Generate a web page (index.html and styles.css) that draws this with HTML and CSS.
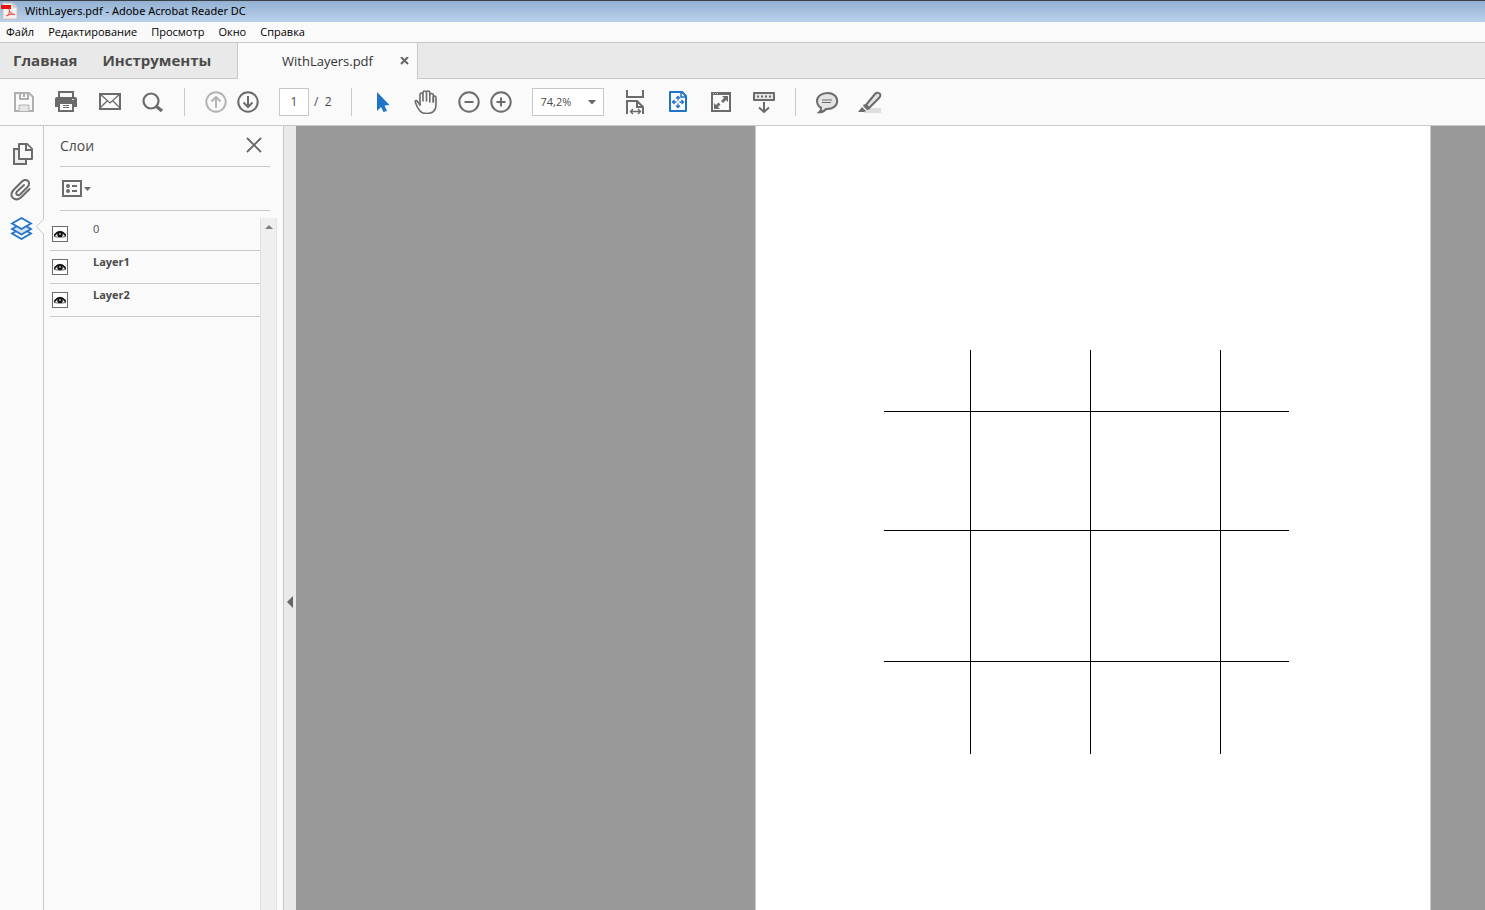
FILE: index.html
```html
<!DOCTYPE html>
<html lang="ru">
<head>
<meta charset="utf-8">
<title>WithLayers.pdf - Adobe Acrobat Reader DC</title>
<link rel="stylesheet" href="styles.css">
</head>
<body>
<svg width="0" height="0" hidden>
  <symbol id="eye" viewBox="0 0 12 10"><path d="M0 6Q6-2 12 5.500V8Q6 9.500 0 8z" fill="#777"/><path d="M0 6.500Q6-1 12 6.500" fill="none" stroke="#111" stroke-width="1.400"/><path d="M1.500 6.500l2-1.500v3zM10.500 6.500l-2-1.500v3z" fill="#fff"/><circle cx="6" cy="5.500" r="2.600" fill="#111"/><path d="M6 4v2" stroke="#fff"/></symbol>
</svg>
<div class="app">
  <header class="titlebar">
    <svg class="app-icon" width="18" height="18" viewBox="0 0 18 18"><path d="M3 1h10l4 4v12H3z" fill="#f4f1ef" stroke="#c9c4c2"/><path d="M13 1v4h4" fill="#ddd" stroke="#bbb"/><path d="M1 3h10v4H1z" fill="#e3150c"/><path d="M6 14c3-1 4-4 3-7 0 3 3 6 6 5.500-3-1-6 0-9 1.500z" fill="none" stroke="#e4685f" stroke-width="1.300"/></svg>
    <span>WithLayers.pdf - Adobe Acrobat Reader DC</span>
  </header>
  <nav class="menubar">
    <button>Файл</button><button>Редактирование</button><button>Просмотр</button><button>Окно</button><button>Справка</button>
  </nav>
  <div class="tabs">
    <div class="main-tabs"><button>Главная</button><button>Инструменты</button></div>
    <div class="doc-tab"><span>WithLayers.pdf</span>
      <button class="tab-close" aria-label="Закрыть вкладку"><svg width="9" height="9" viewBox="0 0 9 9"><path d="M1 0l7 7M8 0L1 7" stroke="#666" stroke-width="2"/></svg></button>
    </div>
    <div class="tab-rest"></div>
  </div>
  <div class="toolbar">
    <div class="group wide">
      <button aria-label="Сохранить"><svg width="24" height="24" viewBox="0 0 24 24" fill="none" stroke="#b0b0b0" stroke-width="2"><path d="M3 3h14l4 4v14H3z"/><path d="M8 3v6h8V3"/><path d="M7 21v-6h10v6" fill="#e6e6e6" stroke-width="1"/><path d="M12 4v3"/></svg></button>
      <button aria-label="Печать"><svg width="24" height="24" viewBox="0 0 24 24"><path d="M0 9q0-2 2-2h18q2 0 2 2v8H0z" fill="#6b6b6b"/><path d="M4 7V2h14v5" fill="#fafafa" stroke="#6b6b6b" stroke-width="2"/><path d="M4 13h14v8H4z" fill="#fff" stroke="#6b6b6b" stroke-width="2"/><path d="M8 15.500h6M8 17.500h6" stroke="#6b6b6b"/><path d="M17 9.500h2" stroke="#ddd"/></svg></button>
      <button aria-label="Отправить"><svg width="24" height="24" viewBox="0 0 24 24" fill="none" stroke="#6b6b6b"><path d="M2 4h20v15H2z" stroke-width="2"/><path d="M2 4l10 9 10-9M2 18l7-7M22 18l-7-7" stroke-width="1.300"/></svg></button>
      <button aria-label="Найти"><svg width="24" height="24" viewBox="0 0 24 24" fill="none" stroke="#6b6b6b"><circle cx="10" cy="11" r="7.500" stroke-width="2.200"/><path d="M15.500 16.500L21 21" stroke-width="3.400"/></svg></button>
    </div>
    <i class="sep"></i>
    <div class="group close">
      <button aria-label="Предыдущая страница"><svg width="24" height="24" viewBox="0 0 24 24" fill="none" stroke="#b4b4b4" stroke-width="2"><circle cx="12" cy="12" r="9.700"/><path d="M12 18V7M7.500 11.500L12 7l4.500 4.500"/></svg></button>
      <button aria-label="Следующая страница"><svg width="24" height="24" viewBox="0 0 24 24" fill="none" stroke="#6b6b6b" stroke-width="2"><circle cx="12" cy="12" r="9.700"/><path d="M12 6v11M7.500 12.500L12 17l4.500-4.500"/></svg></button>
    </div>
    <label class="page-field"><input type="text" value="1" aria-label="Страница"><span>/&nbsp; 2</span></label>
    <i class="sep"></i>
    <div class="group wide">
      <button aria-label="Выделение"><svg width="24" height="24" viewBox="0 0 24 24"><path d="M6 2v19l4-4 2.500 5 3.500-1-2.500-5.500 5-.5z" fill="#1f73c9"/></svg></button>
      <button aria-label="Рука"><svg width="24" height="24" viewBox="0 0 24 24" fill="none" stroke="#6b6b6b" stroke-width="1.600" stroke-linejoin="round" stroke-linecap="round"><path d="M6 15L3.500 11.500C2.500 10 1 10.500 1.300 12c1 3.500 2.400 6.500 4.700 9 1.500 2 3.500 2.500 6.500 2.500 6 0 9.500-3 9.500-8.500V7.500c0-2-2.700-2-2.700 0V12"/><path d="M6 15V4.500c0-2 3-2 3 0V11M9 11V2.500c0-2 3.500-2 3.500 0V11M12.500 11V2.500c0-2 3.300-2 3.300 0V12M15.800 5c0-2 3.500-2 3.500 0v7"/></svg></button>
    </div>
    <div class="group close zoomers">
      <button aria-label="Уменьшить"><svg width="24" height="24" viewBox="0 0 24 24" fill="none" stroke="#6b6b6b" stroke-width="2"><circle cx="12" cy="12" r="9.700"/><path d="M7.500 12h9"/></svg></button>
      <button aria-label="Увеличить"><svg width="24" height="24" viewBox="0 0 24 24" fill="none" stroke="#6b6b6b" stroke-width="2"><circle cx="12" cy="12" r="9.700"/><path d="M7.500 12h9M12 7.500v9"/></svg></button>
    </div>
    <div class="zoom"><select aria-label="Масштаб"><option>74,2%</option></select><svg width="8" height="5" viewBox="0 0 8 5"><path d="M0 0h8L4 4.500z" fill="#666"/></svg></div>
    <div class="group wide">
      <button aria-label="По ширине"><svg width="24" height="26" viewBox="0 0 24 26" fill="none" stroke="#6b6b6b" stroke-width="2"><path d="M4 1v7h16V1"/><path d="M4 25V12h10l6 6v7M14 12v6h6"/><path d="M7 22.500h11M10 20l-2.500 2.500L10 25M15 20l2.500 2.500L15 25" stroke-width="1.400"/></svg></button>
      <button aria-label="Страница целиком"><svg width="24" height="24" viewBox="0 0 24 24" fill="none" stroke="#1f73c9" stroke-width="2"><path d="M4 2h12l4 4v15H4z" stroke-linejoin="round"/><path d="M15 2v5h5" stroke-width="1.500"/><path d="M12 6.500v4M12 13.500v4M6.500 12h4M13.500 12h4M10 8.500l2-2 2 2M10 15.500l2 2 2-2M8.500 10l-2 2 2 2M15.500 10l2 2-2 2" stroke-width="1.300"/></svg></button>
      <button aria-label="Полный экран"><svg width="24" height="24" viewBox="0 0 24 24"><path d="M3 3h18v18H3z" fill="#fafafa" stroke="#6b6b6b" stroke-width="2"/><path d="M3 3h18v2H3z" fill="#6b6b6b"/><path d="M13 6h6v6l-2-2-3 3-2-2 3-3zM5 13v6h6l-2-2 2.500-2.500-2-2L7 15z" fill="#6b6b6b"/><path d="M4 3.500h6" stroke="#bbb" stroke-dasharray="1 1"/></svg></button>
      <button aria-label="Режим чтения"><svg width="24" height="24" viewBox="0 0 24 24" fill="none" stroke="#6b6b6b" stroke-width="2"><path d="M2 3h20v7H2z" fill="#e6e6e6" stroke-linejoin="round"/><path d="M5 6.500h14" stroke-dasharray="2 2"/><path d="M12 12v10M7 17.500l5 4.500 5-4.500"/></svg></button>
    </div>
    <i class="sep"></i>
    <div class="group wide">
      <button aria-label="Комментарий"><svg width="24" height="24" viewBox="0 0 24 24" fill="#e3e3e3" stroke="#6b6b6b" stroke-width="2"><path d="M12.500 3C6.500 3 2 6.500 2 11c0 3 1.500 5.300 4 6.700.3 2-.5 3.500-1.800 4.600 3 0 5.300-1.300 7-3.300 6.800.3 11-3.200 11-8s-4-8-9.700-8z"/><path d="M7 10h10M7 12.500h9" stroke-width="1.200"/></svg></button>
      <button aria-label="Выделить текст"><svg width="24" height="24" viewBox="0 0 24 24"><path d="M9 18h14v5H6z" fill="#dedede"/><path d="M8 15L17 4c2-2 5-1 5 0 1 2 0 3-1 4L11 18z" fill="#e3e3e3" stroke="#6b6b6b" stroke-width="2"/><path d="M6 14l6 5-3 1-4-4zM4 17l4 4-2 1H0z" fill="#6b6b6b"/></svg></button>
    </div>
  </div>
  <main class="work">
    <aside class="rail">
      <button aria-label="Миниатюры"><svg width="24" height="24" viewBox="0 0 24 24" fill="#fafafa" stroke="#6b6b6b" stroke-width="2"><path d="M9 7H4v15h12v-4" fill="#eee"/><path d="M9 2h8l5 5v10H9z" stroke-linejoin="round"/><path d="M16 2v6h6"/></svg></button>
      <button aria-label="Вложения"><svg width="24" height="24" viewBox="1 2 24 24" fill="none" stroke="#6b6b6b" stroke-width="2" stroke-linecap="round"><path d="M20.500 12L13 19.500C10 22.500 6.500 23 4 21S2 16 4.500 13L13 4.500c2-2 4.500-1.800 6-.5s1.500 4-.5 6l-7.500 7.500c-2 2-5-.5-3-3L15 8"/></svg></button>
      <button aria-label="Слои"><svg width="24" height="24" viewBox="0 -1 24 24" fill="none" stroke="#1f73c9" stroke-width="1.800"><path d="M2 16.500L11.500 22l9.500-5.500-9.500-5.500z" fill="#fafafa"/><path d="M2 12l9.500 5.500L21 12l-9.500-5.500z" fill="#d3e2f3"/><path d="M2 6.500L11.500 12 21 6.500 11.500 1z" fill="#fafafa"/></svg></button>
      <svg class="pointer" width="8" height="15" viewBox="0 0 8 15"><path d="M7.500 0L.5 7.500l7 7.500" fill="#fafafa" stroke="#c8c8c8"/></svg>
    </aside>
    <section class="panel">
      <div class="panel-head"><h2>Слои</h2><button aria-label="Закрыть"><svg width="16" height="16" viewBox="0 0 16 16"><path d="M1 1l14 14M15 1L1 15" stroke="#666" stroke-width="1.800"/></svg></button></div>
      <div class="panel-tools"><button aria-label="Параметры"><svg width="30" height="18" viewBox="0 0 30 18" fill="none" stroke="#6b6b6b" stroke-width="2"><path d="M1 1h18v15H1z"/><path d="M10 6h5M10 11h5"/><g fill="#6b6b6b" stroke="none"><circle cx="6" cy="6" r="2"/><circle cx="6" cy="11" r="2"/><path d="M22 7h7l-3.500 4z"/></g></svg></button></div>
      <div class="panel-body">
        <ul class="layers">
          <li><button aria-label="Видимость 0"><svg width="12" height="10"><use href="#eye"/></svg></button><span>0</span></li>
          <li><button aria-label="Видимость Layer1"><svg width="12" height="10"><use href="#eye"/></svg></button><b>Layer1</b></li>
          <li><button aria-label="Видимость Layer2"><svg width="12" height="10"><use href="#eye"/></svg></button><b>Layer2</b></li>
        </ul>
        <div class="scroll"><svg width="8" height="4" viewBox="0 0 8 4"><path d="M0 4l4-4 4 4z" fill="#808080"/></svg></div>
      </div>
    </section>
    <button class="splitter" aria-label="Свернуть панель"><svg width="6" height="12" viewBox="0 0 6 12"><path d="M6 0v12L0 6z" fill="#666"/></svg></button>
    <section class="canvas">
      <div class="sheet">
        <svg class="drawing" width="405" height="404" viewBox="0 0 405 404" stroke="#000" shape-rendering="crispEdges"><path d="M86.500 0v404M206.500 0v404M336.500 0v404M0 61.500h405M0 180.500h405M0 311.500h405"/></svg>
      </div>
    </section>
  </main>
</div>
</body>
</html>
```
FILE: styles.css
```css
* { box-sizing: border-box; }
body {
  margin: 0;
  font-family: "Open Sans", "Noto Sans", sans-serif;
  font-size: 12px;
  color: #4b4b4b;
  background: #fafafa;
}
button {
  padding: 0;
  border: 0;
  background: none;
  font: inherit;
  color: inherit;
}
svg { display: block; flex: none; }
.app { display: flex; flex-direction: column; height: 100vh; overflow: hidden; }

.titlebar {
  display: flex;
  align-items: center;
  gap: 7px;
  height: 22px;
  flex: none;
  padding-bottom: 2px;
  border-top: 1px solid #3c4148;
  background: linear-gradient(#94b1d3, #b9d1ea);
  font-family: "Noto Sans", sans-serif;
  font-size: 11px;
  color: #000;
}
.menubar {
  display: flex;
  align-items: center;
  gap: 14px;
  height: 20px;
  flex: none;
  padding: 0 0 2px 6px;
  font-size: 11px;
  color: #000;
}
.tabs { display: flex; height: 37px; flex: none; border-top: 1px solid #c8c8c8; }
.main-tabs {
  display: flex;
  align-items: center;
  gap: 25px;
  width: 238px;
  padding: 0 0 2px 13px;
  border-right: 1px solid #c8c8c8;
  border-bottom: 1px solid #c8c8c8;
  background: #e9e9e9;
  font-size: 15px;
  font-weight: 700;
}
.doc-tab {
  display: flex;
  align-items: center;
  justify-content: space-between;
  width: 180px;
  padding: 0 8px 0 44px;
  border-right: 1px solid #c8c8c8;
  font-size: 13px;
  color: #333;
}
.tab-rest { flex: 1; background: #e9e9e9; border-bottom: 1px solid #c8c8c8; }

.toolbar {
  display: flex;
  align-items: center;
  height: 47px;
  flex: none;
  padding-left: 12px;
  border-bottom: 1px solid #c8c8c8;
}
.group { display: flex; align-items: center; }
.wide { gap: 19px; }
.close { gap: 8px; }
.sep { width: 1px; height: 28px; margin: 0 19px; background: #c8c8c8; }
.page-field { display: flex; align-items: center; gap: 5px; margin-left: 19px; }
.page-field input {
  width: 30px;
  height: 28px;
  padding: 0 0 2px;
  border: 1px solid #c8c8c8;
  background: #fff;
  font: inherit;
  color: inherit;
  text-align: center;
}
.page-field span { padding-bottom: 2px; }
.zoomers { margin: 0 19px; }
.zoom { display: grid; align-items: center; margin-right: 19px; }
.zoom select {
  grid-area: 1 / 1;
  width: 72px;
  height: 28px;
  padding: 0 8px 2px;
  border: 1px solid #c8c8c8;
  border-radius: 0;
  background: #fff;
  appearance: none;
  font: inherit;
  font-size: 11px;
  color: inherit;
}
.zoom svg { grid-area: 1 / 1; justify-self: end; margin-right: 8px; pointer-events: none; }

.work { display: flex; flex: 1; min-height: 0; }
.rail {
  position: relative;
  display: flex;
  flex-direction: column;
  align-items: center;
  gap: 13px;
  width: 44px;
  flex: none;
  padding-top: 16px;
  border-right: 1px solid #c8c8c8;
}
.pointer { position: absolute; right: -1px; top: 93px; background: #fafafa; }
.panel {
  display: flex;
  flex-direction: column;
  width: 240px;
  flex: none;
  border-right: 1px solid #c8c8c8;
}
.panel-head, .panel-tools {
  display: flex;
  align-items: center;
  margin: 0 13px 0 16px;
  border-bottom: 1px solid #c8c8c8;
}
.panel-head { justify-content: space-between; height: 41px; padding: 0 8px 2px 0; }
.panel-head h2 { margin: 0; font-size: 14px; font-weight: 400; }
.panel-tools { height: 44px; padding-left: 2px; }
.panel-body { display: flex; flex: 1; margin: 7px 6px 0; }
.layers { flex: 1; margin: 0; padding: 0; list-style: none; font-size: 11px; }
.layers li {
  display: flex;
  align-items: flex-start;
  gap: 25px;
  height: 33px;
  padding: 3px 0 0 2px;
  border-bottom: 1px solid #c8c8c8;
}
.layers button {
  display: flex;
  align-items: center;
  justify-content: center;
  width: 16px;
  height: 16px;
  margin-top: 5px;
  border: 1px solid #6b6b6b;
  background: #fff;
}
.scroll {
  display: flex;
  justify-content: center;
  width: 17px;
  padding-top: 7px;
  border-left: 1px solid #e1e1e1;
  border-right: 1px solid #e4e4e4;
  background: #efefef;
}
.splitter {
  display: flex;
  align-items: center;
  justify-content: center;
  width: 12px;
  flex: none;
  padding-top: 168px;
  background: #e9e9e9;
}
.canvas { display: flex; flex: 1; background: #999; }
.sheet {
  width: 676px;
  margin: 0 54px 0 auto;
  padding: 224px 0 0 128px;
  border: solid #c8c8c8;
  border-width: 0 1px;
  background: #fff;
}
```
